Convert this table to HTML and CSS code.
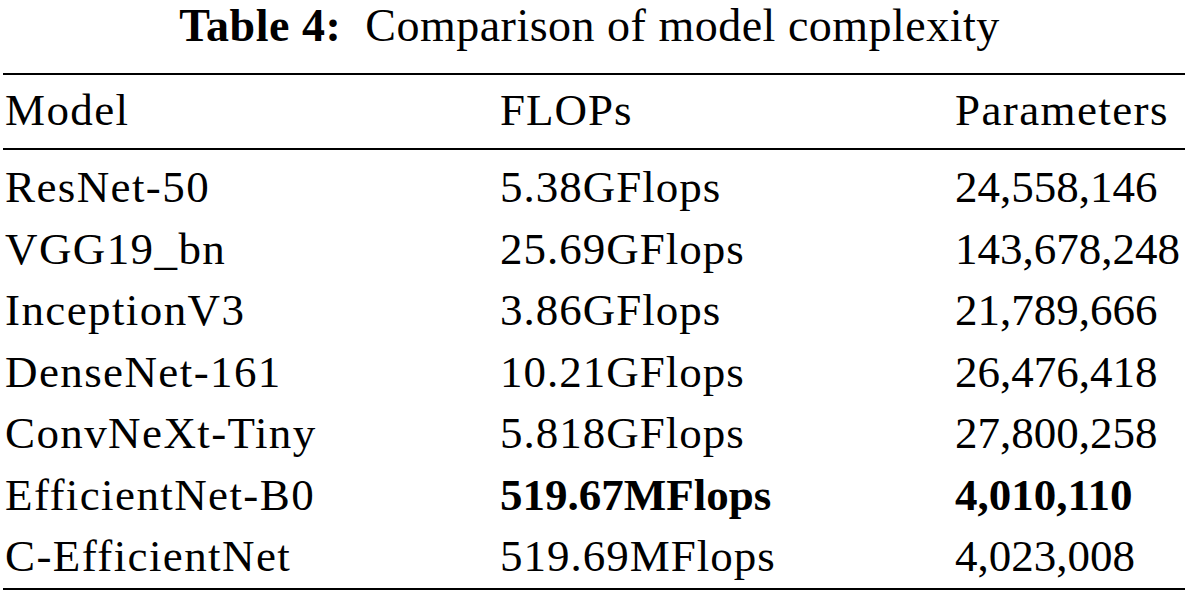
FILE: index.html
```html
<!DOCTYPE html>
<html lang="en">
<head>
  <meta charset="UTF-8" />
  <meta name="viewport" content="width=device-width, initial-scale=1.0"/>
  <title>Table 4 - Comparison of model complexity</title>
  <link rel="stylesheet" href="styles.css">
</head>
<body>
  <div class="caption">
    <span class="caption-label">Table 4:</span>&nbsp; Comparison of model complexity
  </div>

  <div class="table">
    <div class="row head">
      <div class="name">Model</div>
      <div class="flops">FLOPs</div>
      <div class="name">Parameters</div>
    </div>

    <div class="body">
      <div class="row">
        <div class="name">ResNet-50</div>
        <div class="flops">5.38GFlops</div>
        <div class="params">24,558,146</div>
      </div>
      <div class="row">
        <div class="name">VGG19_bn</div>
        <div class="flops">25.69GFlops</div>
        <div class="params">143,678,248</div>
      </div>
      <div class="row">
        <div class="name">InceptionV3</div>
        <div class="flops">3.86GFlops</div>
        <div class="params">21,789,666</div>
      </div>
      <div class="row">
        <div class="name">DenseNet-161</div>
        <div class="flops">10.21GFlops</div>
        <div class="params">26,476,418</div>
      </div>
      <div class="row">
        <div class="name">ConvNeXt-Tiny</div>
        <div class="flops">5.818GFlops</div>
        <div class="params">27,800,258</div>
      </div>
      <div class="row">
        <div class="name">EfficientNet-B0</div>
        <div class="flops best">519.67MFlops</div>
        <div class="params best">4,010,110</div>
      </div>
      <div class="row">
        <div class="name">C-EfficientNet</div>
        <div class="flops">519.69MFlops</div>
        <div class="params">4,023,008</div>
      </div>
    </div>
  </div>
</body>
</html>
```

FILE: styles.css
```css
* {
  box-sizing: border-box;
}

body {
  margin: 0;
  background: #fff;
  color: #000;
  font-family: "Liberation Serif", "Times New Roman", serif;
  font-size: 45px;
}

.caption {
  height: 51px;
  padding-right: 8px;
  line-height: 51px;
  font-size: 46px;
  letter-spacing: 0.5px;
  text-align: center;
  white-space: nowrap;
}

.caption-label {
  font-weight: 700;
}

.table {
  margin: 22px 2px 0 3px;
  border-top: 2px solid #000;
  border-bottom: 2px solid #000;
}

.row {
  display: grid;
  grid-template-columns: 495px 455px 1fr;
  height: 61.5px;
  line-height: 61.5px;
  padding-left: 2px;
  white-space: nowrap;
}

.head {
  height: auto;
  padding-top: 5px;
  padding-bottom: 6.5px;
  border-bottom: 2px solid #000;
}

.body {
  padding: 7px 0 0.5px;
}

.name {
  letter-spacing: 1.4px;
}

.flops {
  letter-spacing: 1px;
}

.params {
  letter-spacing: 0;
}

.best {
  font-weight: 700;
  letter-spacing: 0;
}
```
